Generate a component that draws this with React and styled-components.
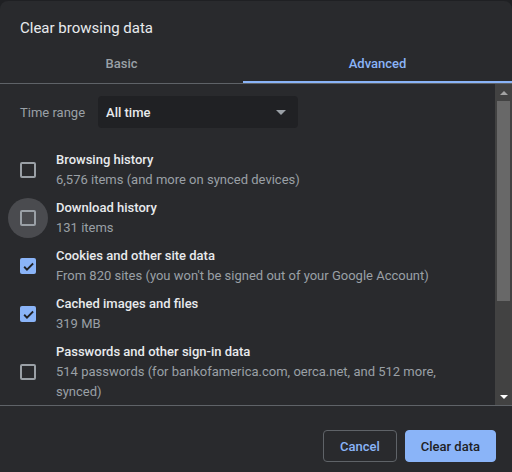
import React, { useState } from "react";
import styled, { createGlobalStyle } from "styled-components";

const GlobalStyle = createGlobalStyle`
  html, body {
    margin: 0;
    padding: 0;
    background: #1f2023;
    font-family: Roboto, "Noto Sans", "Liberation Sans", sans-serif;
    -webkit-font-smoothing: antialiased;
  }
  * { box-sizing: border-box; }
`;

const Dialog = styled.div`
  margin-top: 1px;
  width: 512px;
  height: 471px;
  background: #292a2d;
  border-radius: 8px 8px 0 0;
  display: flex;
  flex-direction: column;
  overflow: hidden;
`;

const Title = styled.h2`
  margin: 0;
  padding: 15px 20px 0;
  font-size: 15px;
  font-weight: 400;
  line-height: 24px;
  color: #e8eaed;
`;

const Tabs = styled.div`
  display: flex;
  margin-top: 4px;
  border-bottom: 1px solid #5f6368;
`;

const Tab = styled.div`
  flex: ${(p) => p.$grow};
  height: 39px;
  display: flex;
  align-items: center;
  justify-content: center;
  font-size: 13px;
  font-weight: 500;
  color: ${(p) => (p.$active ? "#8ab4f8" : "#9aa0a6")};
  box-shadow: ${(p) => (p.$active ? "inset 0 -2px 0 #8ab4f8" : "none")};
`;

const Body = styled.div`
  display: flex;
  height: 322px;
  border-bottom: 1px solid #5f6368;
`;

const List = styled.div`
  flex: 1;
  overflow: hidden;
  padding: 12px 0 0 20px;
`;

const RangeRow = styled.div`
  display: flex;
  align-items: center;
  gap: 13px;
  margin-bottom: 18px;
`;

const Label = styled.span`
  font-size: 13px;
  color: #9aa0a6;
`;

const Select = styled.div`
  width: 200px;
  height: 32px;
  background: #202124;
  border-radius: 4px;
  display: flex;
  align-items: center;
  justify-content: space-between;
  padding: 0 8px;
  font-size: 13px;
  font-weight: 500;
  color: #e8eaed;
`;

const Caret = styled.span`
  width: 0;
  height: 0;
  margin-right: 4px;
  border-left: 5px solid transparent;
  border-right: 5px solid transparent;
  border-top: 5px solid #9aa0a6;
`;

const Row = styled.label`
  display: flex;
  align-items: center;
  padding: 4px 0;
`;

const BoxWrap = styled.span`
  position: relative;
  width: 16px;
  height: 16px;
  margin-right: 20px;
  flex-shrink: 0;

  &::before {
    content: "";
    display: ${(p) => (p.$hover ? "block" : "none")};
    position: absolute;
    left: -12px;
    top: -12px;
    width: 40px;
    height: 40px;
    border-radius: 50%;
    background: #4a4b4f;
  }
`;

const Box = styled.span`
  position: relative;
  display: flex;
  align-items: center;
  justify-content: center;
  width: 16px;
  height: 16px;
  border-radius: 2px;
  border: ${(p) => (p.$checked ? "none" : "2px solid #9aa0a6")};
  background: ${(p) => (p.$checked ? "#8ab4f8" : "transparent")};
`;

const Text = styled.div`
  line-height: 20px;
  font-size: 13px;
  padding-right: 20px;
`;

const ItemTitle = styled.div`
  color: #e8eaed;
  font-weight: 500;
`;

const ItemSub = styled.div`
  color: #9aa0a6;
`;

const Scrollbar = styled.div`
  width: 17px;
  background: #424242;
  display: flex;
  flex-direction: column;
  align-items: center;
`;

const Arrow = styled.span`
  width: 0;
  height: 0;
  margin: ${(p) => (p.$down ? "auto 0 6px" : "7px 0 6px")};
  border-left: 4px solid transparent;
  border-right: 4px solid transparent;
  ${(p) =>
    p.$down
      ? "border-top: 4px solid #ffffff;"
      : "border-bottom: 4px solid #a3a3a3;"}
`;

const Thumb = styled.span`
  width: 13px;
  height: 200px;
  background: #686868;
`;

const Footer = styled.div`
  display: flex;
  justify-content: flex-end;
  gap: 8px;
  padding: 24px 16px 0;
`;

const Button = styled.button`
  height: 32px;
  padding: 0 ${(p) => (p.$primary ? "15px" : "16px")};
  border-radius: 4px;
  font-family: inherit;
  font-size: 13px;
  font-weight: 500;
  border: 1px solid ${(p) => (p.$primary ? "#8ab4f8" : "#5f6368")};
  background: ${(p) => (p.$primary ? "#8ab4f8" : "transparent")};
  color: ${(p) => (p.$primary ? "#202124" : "#8ab4f8")};
`;

const items = [
  { title: "Browsing history", sub: "6,576 items (and more on synced devices)", checked: false },
  { title: "Download history", sub: "131 items", checked: false, hover: true },
  { title: "Cookies and other site data", sub: "From 820 sites (you won't be signed out of your Google Account)", checked: true },
  { title: "Cached images and files", sub: "319 MB", checked: true },
  { title: "Passwords and other sign-in data", sub: "514 passwords (for bankofamerica.com, oerca.net, and 512 more, synced)", checked: false },
];

const Check = () => (
  <svg width="13" height="13" viewBox="0 0 24 24">
    <path d="M4 12.5l5.2 5.2L20.5 6.5" fill="none" stroke="#202124" strokeWidth="3.4" />
  </svg>
);

const Item = ({ title, sub, checked, hover }) => (
  <Row>
    <BoxWrap $hover={hover}>
      <Box $checked={checked}>{checked && <Check />}</Box>
    </BoxWrap>
    <Text>
      <ItemTitle>{title}</ItemTitle>
      {sub && <ItemSub>{sub}</ItemSub>}
    </Text>
  </Row>
);

export default function App() {
  const [tab] = useState("advanced");
  return (
    <>
      <GlobalStyle />
      <Dialog>
        <Title>Clear browsing data</Title>
        <Tabs>
          <Tab $grow="243" $active={tab === "basic"}>Basic</Tab>
          <Tab $grow="269" $active={tab === "advanced"}>Advanced</Tab>
        </Tabs>
        <Body>
          <List>
            <RangeRow>
              <Label>Time range</Label>
              <Select>
                All time
                <Caret />
              </Select>
            </RangeRow>
            {items.map((it) => (
              <Item key={it.title} {...it} />
            ))}
          </List>
          <Scrollbar>
            <Arrow />
            <Thumb />
            <Arrow $down />
          </Scrollbar>
        </Body>
        <Footer>
          <Button>Cancel</Button>
          <Button $primary>Clear data</Button>
        </Footer>
      </Dialog>
    </>
  );
}
